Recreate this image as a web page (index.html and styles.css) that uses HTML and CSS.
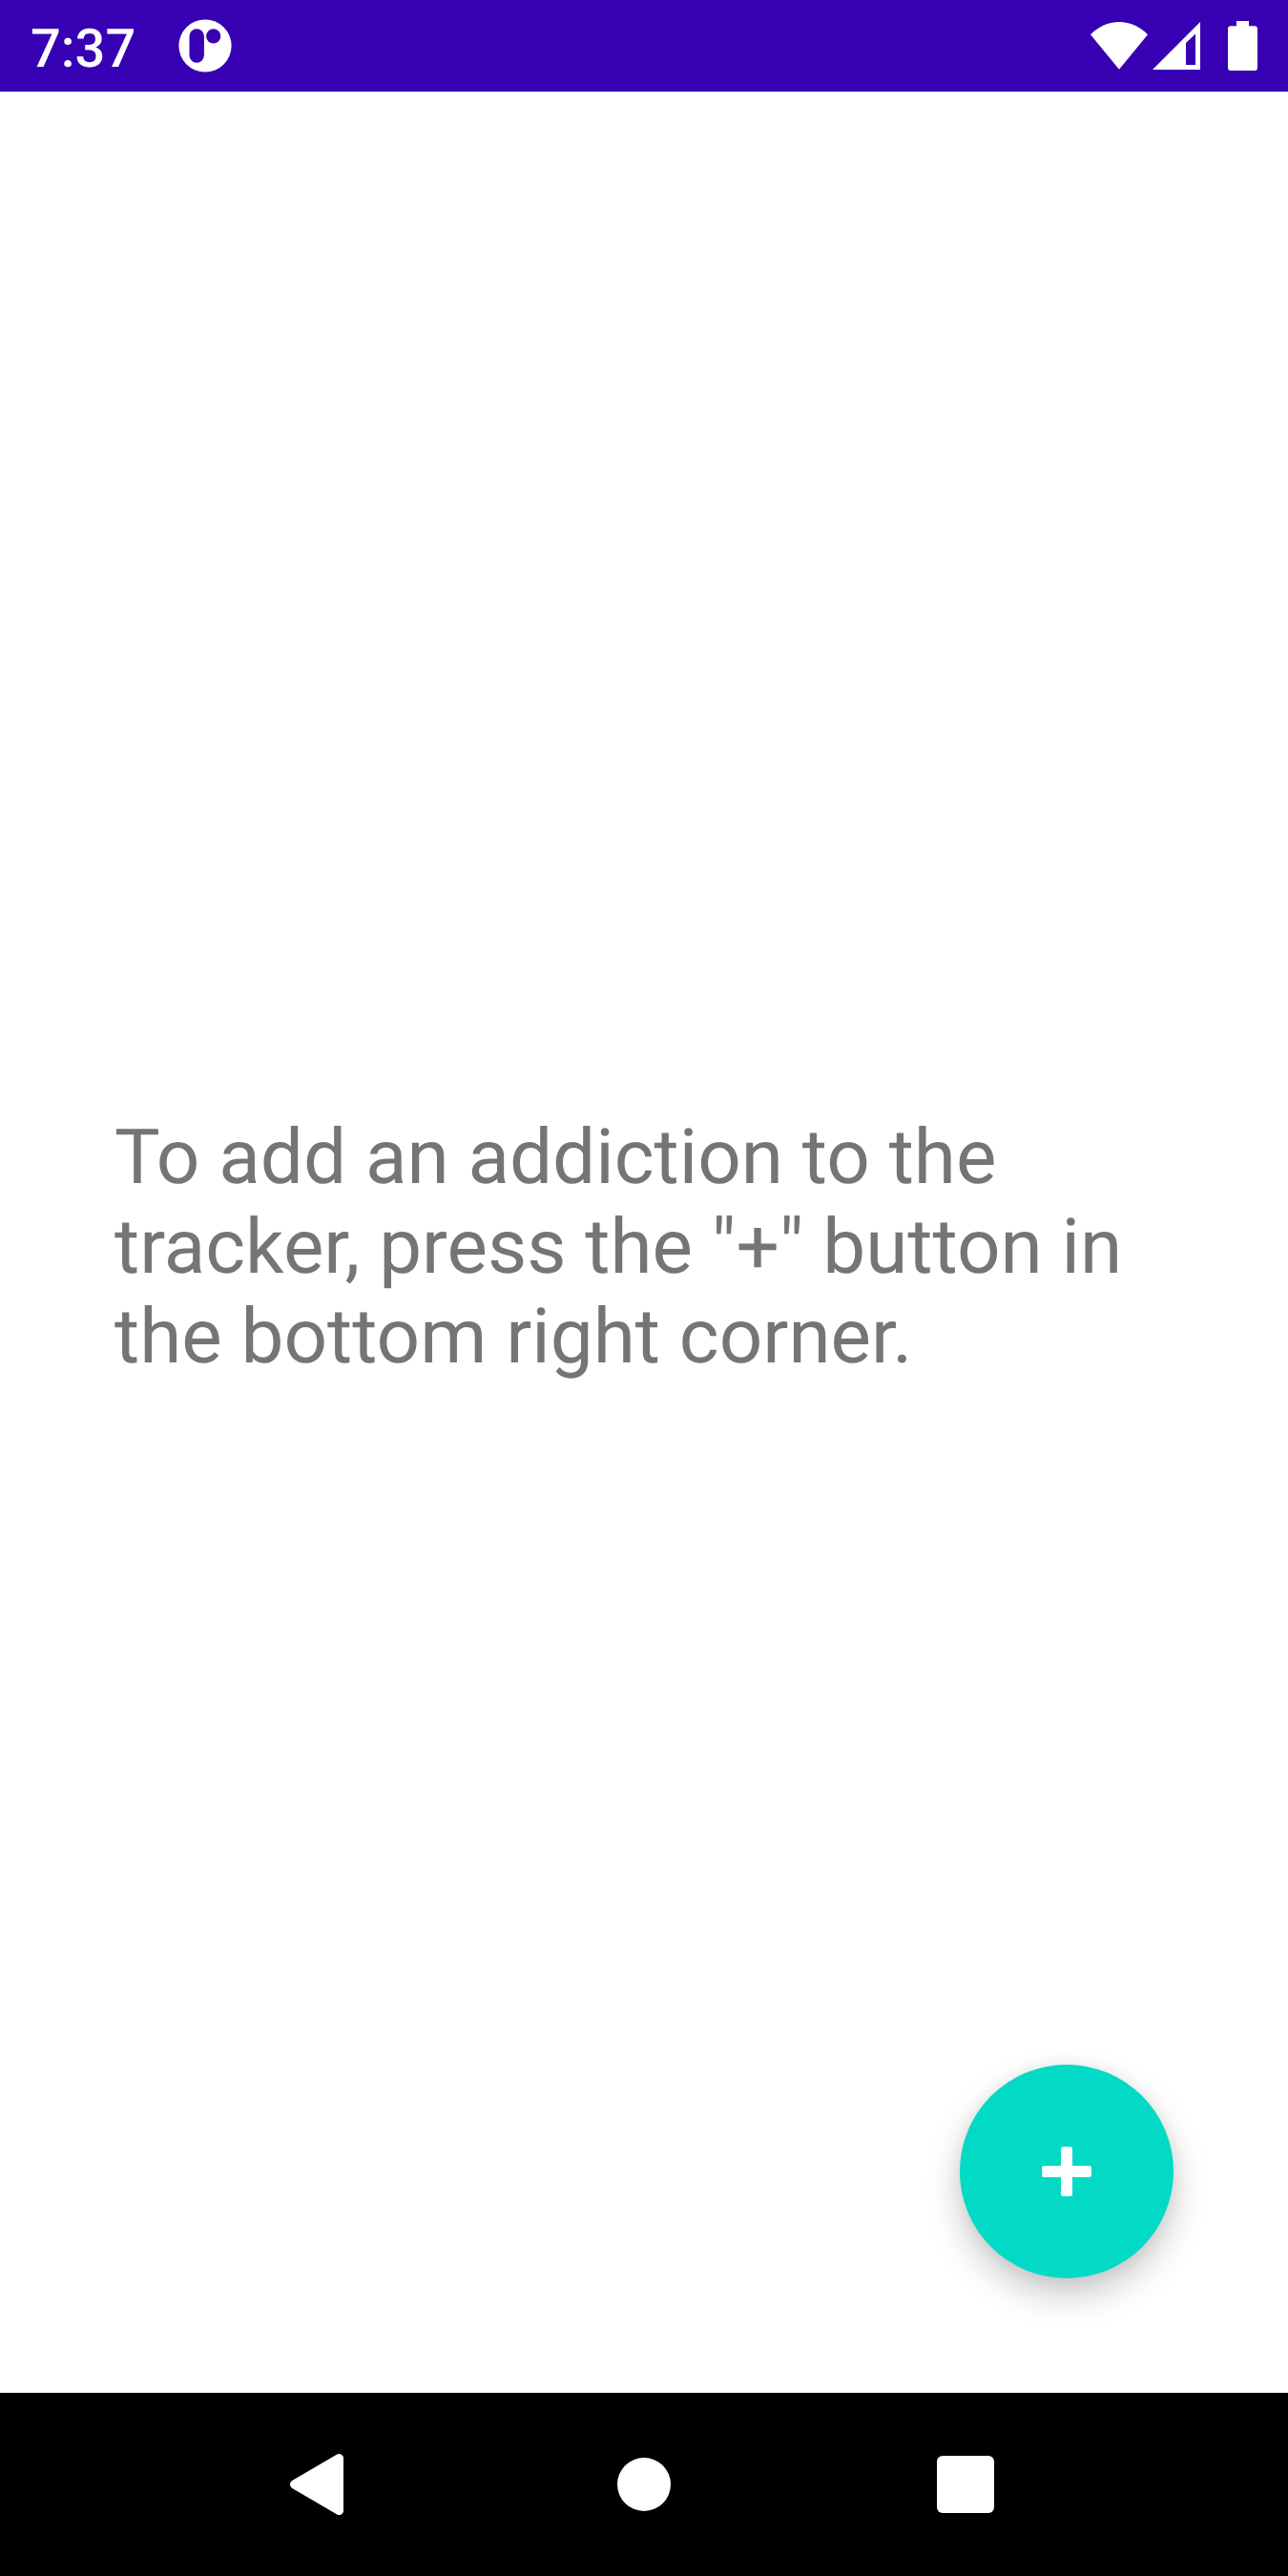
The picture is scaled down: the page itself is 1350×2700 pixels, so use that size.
FILE: index.html
```html
<!DOCTYPE html>
<html lang="en">
<head>
<meta charset="utf-8">
<title>Addiction tracker</title>
<link rel="stylesheet" href="styles.css">
</head>
<body>
<div class="screen">
  <header class="status-bar">
    <div class="status-group">
      <span class="clock">7:37</span>
      <svg class="app-icon" viewBox="0 0 56 56" aria-hidden="true">
        <circle cx="28" cy="28" r="27.6" fill="#fff"/>
        <rect class="cutout" x="11.5" y="10.2" width="15.4" height="35.6" rx="7.7"/>
        <circle class="cutout" cx="36.7" cy="17.8" r="7.6"/>
      </svg>
    </div>
    <div class="status-group">
      <svg class="wifi-icon" viewBox="0 0 60 52" aria-hidden="true">
        <path fill="#fff" d="M30 49.8 60 13.3C52 5 41.500 0 30 0S8 5 0 13.300Z"/>
      </svg>
      <svg class="signal-icon" viewBox="0 0 50 52" aria-hidden="true">
        <path fill="#fff" fill-rule="evenodd" d="M0 50 50 0V50ZM35 22V45H45V12.500Z"/>
      </svg>
      <svg class="battery-icon" viewBox="0 0 31 52" aria-hidden="true">
        <path fill="#fff" d="M9 0H22V5.200H28Q31 5.200 31 8.200V49Q31 52 28 52H3Q0 52 0 49V8.200Q0 5.200 3 5.200H9Z"/>
      </svg>
    </div>
  </header>
  <main class="content">
    <p class="hint">To add an addiction to the tracker, press the "+" button in the bottom right corner.</p>
    <button class="fab" aria-label="Add">
      <svg class="plus-icon" viewBox="0 0 52 52" aria-hidden="true">
        <rect x="20" width="12" height="52" rx="2.500" fill="#fff"/>
        <rect y="20" width="52" height="12" rx="2.500" fill="#fff"/>
      </svg>
    </button>
  </main>
  <nav class="nav-bar">
    <svg class="nav-icon" viewBox="0 0 64 64" aria-label="Back"><path class="back-shape" d="M55.500 4.500V59.500L8.500 32Z"/></svg>
    <svg class="nav-icon nav-home" viewBox="0 0 64 64" aria-label="Home"><circle cx="32" cy="32" r="28" fill="#fff"/></svg>
    <svg class="nav-icon" viewBox="0 0 64 64" aria-label="Recents"><rect x="2" y="2" width="60" height="60" rx="6" fill="#fff"/></svg>
  </nav>
</div>
</body>
</html>
```
FILE: styles.css
```css
* {
  box-sizing: border-box;
}

body {
  margin: 0;
  font-family: Roboto, sans-serif;
  text-rendering: geometricPrecision;
}

.screen {
  display: flex;
  flex-direction: column;
  width: 1350px;
  height: 2700px;
  background: #fff;
}

.status-bar {
  display: flex;
  justify-content: space-between;
  height: 96px;
  padding: 0 32px;
  background: #3700b3;
  color: #fff;
}

.status-group {
  display: flex;
  align-items: flex-start;
}

.clock {
  font-size: 56px;
  font-weight: 500;
  line-height: 66px;
  padding-top: 18px;
  width: 155px;
}

.app-icon {
  width: 56px;
  height: 56px;
  margin-top: 20px;
}

.cutout {
  fill: #3700b3;
}

.wifi-icon {
  width: 60px;
  height: 52px;
  margin: 23px 5px 0 0;
}

.signal-icon {
  width: 50px;
  height: 52px;
  margin: 23px 29px 0 0;
}

.battery-icon {
  width: 31px;
  height: 52px;
  margin-top: 22px;
}

.content {
  flex: 1;
  display: flex;
  flex-direction: column;
  justify-content: space-between;
  padding: 1070px 120px 120px;
}

.hint {
  margin: 0;
  color: #757575;
  font-size: 80px;
  line-height: 94px;
}

.fab {
  display: flex;
  align-items: center;
  justify-content: center;
  align-self: flex-end;
  width: 224px;
  height: 224px;
  padding: 0;
  border: 0;
  border-radius: 50%;
  background: #03dac5;
  box-shadow: 0 17px 36px rgba(0, 0, 0, 0.22), 0 0 16px rgba(0, 0, 0, 0.06);
}

.plus-icon {
  width: 52px;
  height: 52px;
}

.nav-bar {
  display: flex;
  align-items: center;
  justify-content: space-between;
  height: 192px;
  padding: 0 306px 0 300px;
  background: #000;
}

.nav-icon {
  width: 64px;
  height: 64px;
}

.nav-home {
  margin-left: 6px;
}

.back-shape {
  fill: #fff;
  stroke: #fff;
  stroke-width: 9px;
  stroke-linejoin: round;
}
```
